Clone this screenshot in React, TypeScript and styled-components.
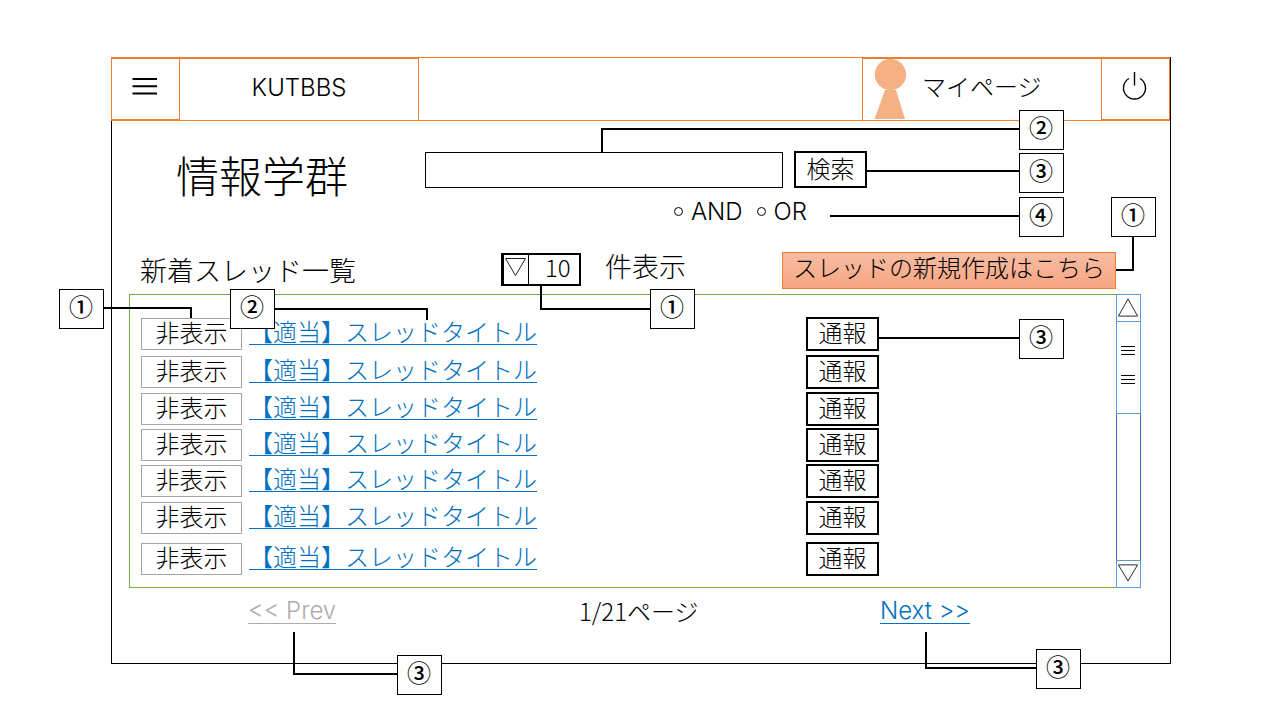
import React from "react";
import styled, { createGlobalStyle, css } from "styled-components";

const ORANGE = "#ed7d31";
const BLUE = "#5b9bd5";
const LINK = "#0070c0";
const LATIN = '"Inter", "Noto Sans CJK JP", sans-serif';

const GlobalStyle = createGlobalStyle`
  *, *::before, *::after { box-sizing: border-box; }
  body {
    margin: 0;
    background: #fff;
    color: #000;
    font-family: "Noto Sans CJK JP", "Noto Sans", sans-serif;
    font-weight: 300;
    font-size: 24px;
    line-height: 32px;
  }
  button, input, select { font: inherit; color: inherit; margin: 0; }
  h1, h2, p, ul { margin: 0; padding: 0; font-weight: inherit; }
`;

const Page = styled.div`
  padding: 57px 109px 56px 111px;
`;

const Frame = styled.div`
  min-width: 960px;
  border-right: 1px solid #000;
`;

const Header = styled.header`
  display: flex;
  height: 64px;
  border: solid ${ORANGE};
  border-width: 1px 0 1px 1px;
`;

const headerCell = css`
  display: flex;
  align-items: center;
  border: 0 solid ${ORANGE};
  border-top-width: 1px;
  background: none;
`;

const IconCell = styled.button`
  ${headerCell}
  justify-content: center;
  width: 68px;
  padding: 0 2px 7px 0;
  border-right-width: 1px;
  border-bottom-width: 1px;
`;

const PowerCell = styled(IconCell)`
  width: 69px;
  border-left-width: 1px;
`;

const BrandCell = styled.div`
  ${headerCell}
  justify-content: center;
  width: 239px;
  padding-bottom: 4px;
  border-right-width: 1px;
  font-family: ${LATIN};
`;

const MyPageCell = styled.button`
  ${headerCell}
  gap: 16px;
  width: 239px;
  margin-left: auto;
  padding: 0 0 0 11px;
  border-left-width: 1px;

  svg { align-self: flex-start; }
  span { padding-bottom: 8px; }
`;

const Main = styled.main`
  border: solid #000;
  border-width: 0 0 1px 1px;
  padding-top: 30px;
`;

const SearchForm = styled.form`
  display: flex;
  flex-wrap: wrap;
  padding-right: 303px;
`;

const BoardTitle = styled.h1`
  width: 313px;
  height: 37px;
  padding-left: 64px;
  font-size: 43px;
  line-height: 46px;
`;

const Anchor = styled.div<{ $grow?: boolean }>`
  position: relative;
  flex: ${(p) => (p.$grow ? "1" : "none")};
`;

const SearchInput = styled.input`
  display: block;
  width: 100%;
  height: 36px;
  margin-top: 1px;
  padding: 0 8px;
  border: 1px solid #000;
  background: #fff;
`;

const BoxButton = styled.button`
  display: block;
  width: 73px;
  height: 34px;
  padding: 0 0 4px;
  border: 2px solid #000;
  background: #fff;
  line-height: 26px;
`;

const SearchButton = styled(BoxButton)`
  height: 37px;
  margin-left: 11px;
`;

const ModeRow = styled.div`
  display: flex;
  justify-content: flex-end;
  padding: 8px 363px 0 0;
`;

const Modes = styled(Anchor)`
  display: flex;
  gap: 14px;
`;

const Mode = styled.label`
  display: flex;
  align-items: center;
  gap: 8px;
  height: 32px;
  padding-bottom: 1px;
  font-family: ${LATIN};
`;

const Radio = styled.input`
  appearance: none;
  width: 9px;
  height: 9px;
  border: 1px solid #000;
  border-radius: 50%;

  &:checked { background: #000; }
`;

const ListHead = styled.div`
  display: flex;
  padding: 24px 54px 0 28px;
  font-size: 27px;
`;

const ListTitle = styled.h2`
  width: 361px;
  font-size: 27px;
  line-height: 36px;
`;

const CountBox = styled(Anchor)`
  display: flex;
  width: 80px;
  height: 33px;
  margin-top: 1px;
  border: 2px solid #000;
  border-left-width: 3px;

  > svg { position: absolute; left: 0; top: 2px; pointer-events: none; }
`;

const CountSelect = styled.select`
  appearance: none;
  width: 100%;
  padding: 0 0 5px 41px;
  border: 0;
  background: linear-gradient(#000, #000) 24px 0 / 1px 100% no-repeat;
  font-size: 24px;
  line-height: 24px;
`;

const CountLabel = styled.span`
  padding-left: 24px;
  line-height: 28px;
`;

const CreateAnchor = styled(Anchor)`
  margin-left: auto;
`;

const CreateButton = styled.button`
  display: block;
  width: 334px;
  height: 37px;
  padding: 0 0 7px;
  border: 1px solid ${ORANGE};
  background: linear-gradient(#f7bda4, #f8a581);
  font-size: 24px;
  line-height: 28px;
`;

const Panel = styled.section`
  display: flex;
  height: 294px;
  margin: 5px 29px 0 17px;
`;

const Threads = styled.ul`
  flex: 1;
  display: grid;
  grid-template-rows: 38px 37px 36px 36px 37px 41px 34px;
  padding: 22px 237px 0 11px;
  border: solid #70ad47;
  border-width: 1px 0 1px 1px;
  list-style: none;
`;

const Thread = styled.li`
  display: flex;
  align-items: flex-start;
`;

const HideButton = styled.button`
  display: block;
  width: 101px;
  height: 32px;
  margin-top: 1px;
  padding: 0 0 4px;
  border: 1px solid #a5a5a5;
  background: #fff;
  line-height: 26px;
`;

const TextLink = styled.a<{ $muted?: boolean }>`
  display: block;
  width: max-content;
  height: 30px;
  border-bottom: 1px solid ${(p) => (p.$muted ? "#afabab" : LINK)};
  color: ${(p) => (p.$muted ? "#afabab" : LINK)};
  text-decoration: none;
`;

const TitleAnchor = styled(Anchor)`
  margin: -2px auto 0 7px;
`;

const ScrollBar = styled.div`
  display: flex;
  flex-direction: column;
  width: 25px;
`;

const ScrollButton = styled.button`
  display: flex;
  align-items: center;
  justify-content: center;
  height: 28px;
  padding: 0 1px 3px 0;
  border: 1px solid ${BLUE};
  background: #fff;
`;

const Thumb = styled.div`
  display: flex;
  flex-direction: column;
  align-items: center;
  gap: 19px;
  height: 92px;
  padding: 24px 1px 0 0;
  border: solid ${BLUE};
  border-width: 0 1px 1px;
`;

const Track = styled.div`
  flex: 1;
  border: solid #4472c4;
  border-width: 0 1px;
`;

const Pager = styled.nav`
  display: grid;
  grid-template-columns: 331px 1fr 290px;
  height: 75px;
  padding: 6px 0 0 136px;
`;

const PageCount = styled.p`
  line-height: 34px;
`;

const PagerLink = styled(TextLink)`
  font-family: ${LATIN};
  line-height: 34px;
`;

const PagerAnchor = styled(Anchor)`
  width: max-content;
`;

/* Annotation marks: numbered box plus an elbow line that ties it to its control. */
const Mark = styled.span<{ $left: string; $top: number }>`
  position: absolute;
  z-index: 2;
  left: ${(p) => p.$left};
  top: ${(p) => p.$top}px;
  width: 45px;
  height: 40px;
  padding-right: 1px;
  border: 1px solid #000;
  background: #fff;
  color: #000;
  font-size: 24px;
  font-weight: 500;
  line-height: 32px;
  text-align: center;
`;

const Wire = styled.span<{
  $left: string;
  $top: number;
  $width: string;
  $height?: number;
  $sides: string;
}>`
  position: absolute;
  z-index: 1;
  left: ${(p) => p.$left};
  top: ${(p) => p.$top}px;
  width: ${(p) => p.$width};
  height: ${(p) => p.$height ?? 2}px;
  border: 0 solid #000;
  border-width: ${(p) => p.$sides};
  pointer-events: none;
`;

const Triangle = ({ up = false }: { up?: boolean }) => (
  <svg width="23" height="20" viewBox="0 0 23 20" fill="none" stroke="#222" strokeWidth="1" aria-hidden="true">
    <path d={up ? "M1.5 19.5 L11.5 1.5 L21.5 19.5 Z" : "M1.5 1.5 L11.5 18.5 L21.5 1.5 Z"} />
  </svg>
);

const Grip = () => (
  <svg width="14" height="10" viewBox="0 0 14 10" stroke="#000" strokeWidth="1" aria-hidden="true">
    <path d="M0 .5H14M0 4.5H14M0 8.5H14" />
  </svg>
);

const threads = Array.from({ length: 7 }, (_, id) => ({ id, title: "【適当】スレッドタイトル" }));

export default function App() {
  return (
    <Page>
      <GlobalStyle />
      <Frame>
        <Header>
          <IconCell aria-label="メニュー">
            <svg width="26" height="18" viewBox="0 0 26 18" stroke="#000" strokeWidth="2" aria-hidden="true">
              <path d="M0.500 2H25M0.500 9.200H25M0.500 16.500H25" />
            </svg>
          </IconCell>
          <BrandCell>KUTBBS</BrandCell>
          <MyPageCell>
            <svg width="32" height="61" viewBox="0 0 32 61" fill="#f4b183" aria-hidden="true">
              <circle cx="16.500" cy="15.500" r="15.700" />
              <path d="M11 31H22L31 60H0.500Z" />
            </svg>
            <span>マイページ</span>
          </MyPageCell>
          <PowerCell aria-label="ログアウト">
            <svg width="26" height="28" viewBox="0 0 26 28" fill="none" stroke="#000" strokeWidth="1.400" aria-hidden="true">
              <path d="M12.500 0V13.500M7 6.500A11 11 0 1 0 18 6.500" />
            </svg>
          </PowerCell>
        </Header>

        <Main>
          <SearchForm onSubmit={(e) => e.preventDefault()}>
            <BoardTitle>情報学群</BoardTitle>
            <Anchor $grow>
              <SearchInput type="text" aria-label="検索キーワード" />
              <Wire $left="176px" $top={-23} $width="calc(100% + 60px)" $height={24} $sides="2px 0 0 2px" />
              <Mark $left="calc(100% + 236px)" $top={-41}>②</Mark>
            </Anchor>
            <Anchor>
              <SearchButton type="submit">検索</SearchButton>
              <Wire $left="100%" $top={19} $width="152px" $sides="2px 0 0 0" />
              <Mark $left="calc(100% + 152px)" $top={2}>③</Mark>
            </Anchor>
          </SearchForm>
          <ModeRow>
            <Modes>
              <Mode>
                <Radio type="radio" name="mode" value="and" />
                AND
              </Mode>
              <Mode>
                <Radio type="radio" name="mode" value="or" />
                OR
              </Mode>
              <Wire $left="calc(100% + 23px)" $top={19} $width="189px" $sides="2px 0 0 0" />
              <Mark $left="calc(100% + 212px)" $top={1}>④</Mark>
            </Modes>
          </ModeRow>

          <ListHead>
            <ListTitle>新着スレッド一覧</ListTitle>
            <CountBox>
              <CountSelect id="count" defaultValue="10">
                <option>10</option>
                <option>20</option>
                <option>50</option>
              </CountSelect>
              <Triangle />
              <Wire $left="36px" $top={30} $width="110px" $height={25} $sides="0 0 2px 2px" />
              <Mark $left="146px" $top={34}>①</Mark>
            </CountBox>
            <CountLabel as="label" htmlFor="count">件表示</CountLabel>
            <CreateAnchor>
              <CreateButton>スレッドの新規作成はこちら</CreateButton>
              <Wire $left="100%" $top={-15} $width="18px" $height={34} $sides="0 2px 2px 0" />
              <Mark $left="calc(100% - 5px)" $top={-55}>①</Mark>
            </CreateAnchor>
          </ListHead>

          <Panel>
            <Threads>
              {threads.map(({ id, title }) => (
                <Thread key={id}>
                  <Anchor>
                    <HideButton>非表示</HideButton>
                    {id === 0 && (
                      <>
                        <Wire $left="-38px" $top={-10} $width="89px" $height={11} $sides="2px 2px 0 0" />
                        <Mark $left="-82px" $top={-28}>①</Mark>
                      </>
                    )}
                  </Anchor>
                  <TitleAnchor>
                    <TextLink href="#thread">{title}</TextLink>
                    {id === 0 && (
                      <>
                        <Wire $left="25px" $top={-7} $width="154px" $height={12} $sides="2px 2px 0 0" />
                        <Mark $left="-19px" $top={-26}>②</Mark>
                      </>
                    )}
                  </TitleAnchor>
                  <Anchor>
                    <BoxButton>通報</BoxButton>
                    {id === 0 && (
                      <>
                        <Wire $left="100%" $top={20} $width="140px" $sides="2px 0 0 0" />
                        <Mark $left="calc(100% + 140px)" $top={2}>③</Mark>
                      </>
                    )}
                  </Anchor>
                </Thread>
              ))}
            </Threads>
            <ScrollBar>
              <ScrollButton aria-label="上へ"><Triangle up /></ScrollButton>
              <Thumb>
                <Grip />
                <Grip />
              </Thumb>
              <Track />
              <ScrollButton aria-label="下へ"><Triangle /></ScrollButton>
            </ScrollBar>
          </Panel>

          <Pager>
            <PagerAnchor>
              <PagerLink href="#prev" $muted>&lt;&lt; Prev</PagerLink>
              <Wire $left="45px" $top={38} $width="104px" $height={43} $sides="0 0 2px 2px" />
              <Mark $left="149px" $top={61}>③</Mark>
            </PagerAnchor>
            <PageCount>1/21ページ</PageCount>
            <PagerAnchor>
              <PagerLink href="#next">Next &gt;&gt;</PagerLink>
              <Wire $left="45px" $top={38} $width="111px" $height={37} $sides="0 0 2px 2px" />
              <Mark $left="156px" $top={55}>③</Mark>
            </PagerAnchor>
          </Pager>
        </Main>
      </Frame>
    </Page>
  );
}
